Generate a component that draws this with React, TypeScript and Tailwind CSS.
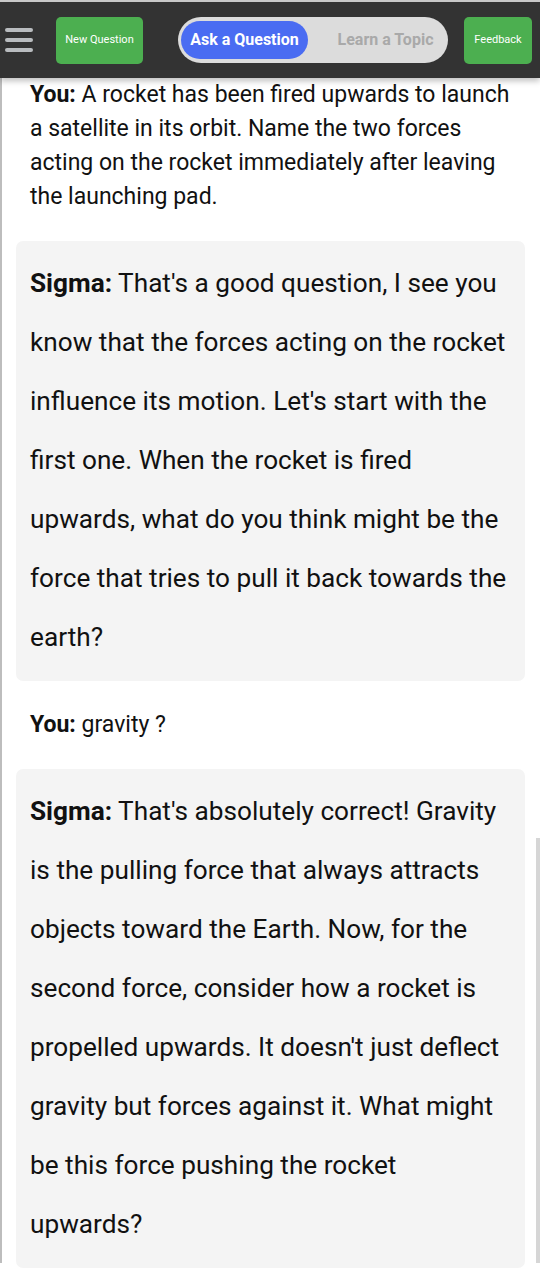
import React from 'react';

const font = { fontFamily: 'Roboto, "Liberation Sans", sans-serif' };

const messages = [
  {
    from: 'You',
    text: 'A rocket has been fired upwards to launch a satellite in its orbit. Name the two forces acting on the rocket immediately after leaving the launching pad.',
  },
  {
    from: 'Sigma',
    text: "That's a good question, I see you know that the forces acting on the rocket influence its motion. Let's start with the first one. When the rocket is fired upwards, what do you think might be the force that tries to pull it back towards the earth?",
  },
  { from: 'You', text: 'gravity ?' },
  {
    from: 'Sigma',
    text: "That's absolutely correct! Gravity is the pulling force that always attracts objects toward the Earth. Now, for the second force, consider how a rocket is propelled upwards. It doesn't just deflect gravity but forces against it. What might be this force pushing the rocket upwards?",
  },
];

const Header = () => (
  <div className="relative z-10 h-[78px] border-t-2 border-[#c8c8c8] bg-[#333333] shadow-[0_3px_6px_rgba(0,0,0,0.25)] flex items-center">
    {/* hamburger */}
    <div className="ml-[5px] w-[28px] flex flex-col gap-[6px]">
      <div className="h-[4px] rounded-full bg-[#b9bcbf]" />
      <div className="h-[4px] rounded-full bg-[#b9bcbf]" />
      <div className="h-[4px] rounded-full bg-[#b9bcbf]" />
    </div>
    <button className="ml-[23px] w-[87px] h-[47px] rounded-[5px] bg-[#4caf50] text-white text-[11px]">
      New Question
    </button>
    <div className="ml-[35px] w-[270px] h-[46px] rounded-full bg-[#dcdcdc] flex items-center p-[3px]">
      <div className="w-[127px] h-[38px] rounded-full bg-[#4a6cf2] text-white text-[16px] font-bold flex items-center justify-center">
        Ask a Question
      </div>
      <div className="flex-1 pl-[18px] text-center text-[#a9a9a9] text-[16px] font-bold">Learn a Topic</div>
    </div>
    <button className="ml-[16px] w-[68px] h-[47px] rounded-[5px] bg-[#4caf50] text-white text-[11px]">
      Feedback
    </button>
  </div>
);

const Message = ({ from, text }: { from: string; text: string }) => {
  if (from === 'You') {
    return (
      <div className="px-[14px] py-[13px] text-[23px] leading-[34px] text-[#111]">
        <span className="font-bold">You:</span> {text}
      </div>
    );
  }
  return (
    <div className="px-[14px] pt-[13px] pb-[14px] bg-[#f4f4f4] rounded-[7px] text-[26.2px] leading-[59px] text-[#111]">
      <span className="font-bold">Sigma:</span> {text}
    </div>
  );
};

export default function App() {
  return (
    <div className="w-[540px] h-[1276px] overflow-hidden bg-white" style={font}>
      <Header />
      <div className="relative h-[1198px] border-l-2 border-[#bdbdbd]">
        <div className="-mt-[13px] pl-[14px] pr-[15px] flex flex-col gap-[14px]">
          {messages.map((m, i) => (
            <Message key={i} from={m.from} text={m.text} />
          ))}
        </div>
        {/* scrollbar */}
        <div className="absolute right-0 top-[773px] w-[4px] h-[425px] bg-[#d6d6d6]" />
      </div>
    </div>
  );
}
